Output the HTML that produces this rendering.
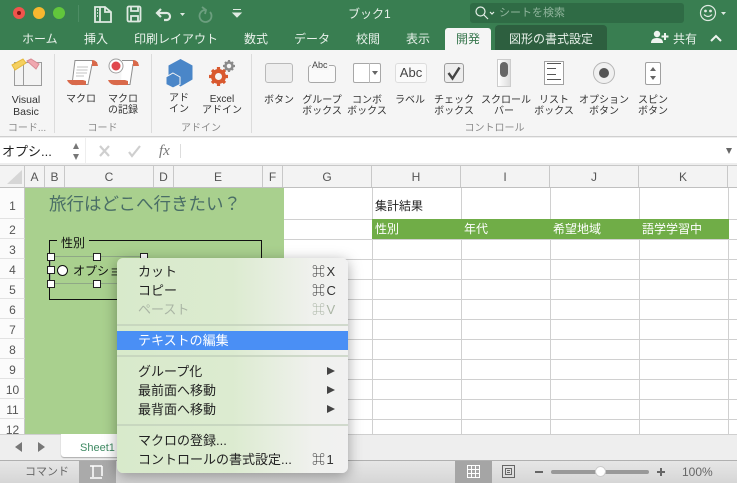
<!DOCTYPE html>
<html><head><meta charset="utf-8">
<style>
*{box-sizing:border-box}
html,body{margin:0;padding:0;width:737px;height:483px;overflow:hidden;background:#fff;font-family:"Liberation Sans","Noto Sans CJK JP",sans-serif;color:#333}
.a{position:absolute}
.t{position:absolute;white-space:nowrap;line-height:1}
.c{position:absolute;text-align:center;white-space:nowrap;line-height:11px;font-size:10px;color:#333}
.tab{position:absolute;top:32px;font-size:12px;color:#e8f1ea;white-space:nowrap;line-height:14px}
.ch{position:absolute;top:166px;height:22px;border-right:1px solid #c8c8c8;text-align:center;font-size:12px;line-height:23px;color:#555;background:#f3f3f3}
.rh{position:absolute;left:0;width:25px;text-align:center;font-size:12px;color:#555;background:#fbfbfb;border-right:1px solid #c8c8c8;border-bottom:1px solid #e2e2e2;padding-left:1px}
.hl{position:absolute;left:283px;width:454px;height:1px;background:#d0d0d0}
.vl{position:absolute;top:188px;height:246px;width:1px;background:#d0d0d0}
.h{position:absolute;width:8px;height:8px;background:#fff;border:1px solid #222}
.m{position:absolute;left:138px;font-size:13px;color:#222;white-space:nowrap;line-height:14px;margin-top:1px}
.k{position:absolute;left:312px;font-size:13px;color:#333;white-space:nowrap;line-height:14px;letter-spacing:1.500px;margin-top:1px}
.ar{position:absolute;left:327px;width:0;height:0;border-left:8px solid #444;border-top:4.500px solid transparent;border-bottom:4.500px solid transparent}
.sep{position:absolute;left:117px;width:231px;height:2px;background:rgba(190,205,185,.65)}
.g{position:absolute;top:54px;width:1px;height:79px;background:#dcdcdc}
.gl{position:absolute;top:123px;font-size:10px;color:#8a8a8a;text-align:center;line-height:12px;white-space:nowrap}
.cth{position:absolute;top:219px;height:20px;background:#70ad47;color:#fff;font-size:12px;line-height:21px;padding-left:3px;white-space:nowrap}
</style></head><body>

<!-- title bar / tabs -->
<div class="a" style="left:0;top:0;width:737px;height:50px;background:#397e51"></div>
<div class="a" style="left:13px;top:7px;width:12px;height:12px;border-radius:50%;background:#f0544c"></div>
<div class="a" style="left:17px;top:11px;width:4px;height:4px;border-radius:50%;background:#7e1512"></div>
<div class="a" style="left:33px;top:7px;width:12px;height:12px;border-radius:50%;background:#f7b72f"></div>
<div class="a" style="left:53px;top:7px;width:12px;height:12px;border-radius:50%;background:#62c63c"></div>
<div class="a" style="left:78px;top:5px;width:1px;height:17px;background:#4d8d64"></div>
<svg class="a" style="left:90px;top:3px" width="160" height="22" fill="none" stroke="#dfeae2" stroke-width="1.800">
<path d="M5 4h10l6 5v10H5zM10 4v15M15 4v5h6M7 7h1M7 10h1M7 13h1"/>
<rect x="37.500" y="3.500" width="13" height="15" rx="1.500"/><path d="M41 4v4h7V4M41 18v-5h7v5"/>
<path d="M71 6l-4 4 4 4M68 10h8a3.500 3.500 0 0 1 1 7h-3" stroke-width="2.200"/>
<path d="M90 10h5l-2.500 3z" fill="#dfeae2" stroke="none"/>
<path d="M115 7a6 6 0 1 0 5 2M112 4l4 3-1 4" stroke="#6c9f7f" stroke-width="1.800"/>
<path d="M143 6.500h8M143 10h8l-4 4z" fill="#dfeae2" stroke="#dfeae2" stroke-width="1"/>
</svg>
<div class="t" style="left:348px;top:8px;font-size:12px;color:#e8f1ea">ブック1</div>
<div class="a" style="left:470px;top:3px;width:214px;height:20px;background:#2f6b45;border-radius:3px"></div>
<svg class="a" style="left:474px;top:5px" width="22" height="16" fill="none" stroke="#e6efe8" stroke-width="1.200"><circle cx="6.500" cy="6.500" r="4.500"/><path d="M10 10l4 4M16 7l2 2 2-2"/></svg>
<div class="t" style="left:499px;top:8px;font-size:11px;color:#8fb49c">シートを検索</div>
<svg class="a" style="left:699px;top:4px" width="32" height="20" fill="none" stroke="#dfeae2" stroke-width="1.200"><circle cx="9" cy="9" r="7.500"/><circle cx="6.500" cy="7" r=".8" fill="#dfeae2"/><circle cx="11.500" cy="7" r=".8" fill="#dfeae2"/><path d="M5 10.500q4 4 8 0"/><path d="M22 8h5l-2.500 3z" fill="#dfeae2" stroke="none"/></svg>

<div class="tab" style="left:22px">ホーム</div>
<div class="tab" style="left:84px">挿入</div>
<div class="tab" style="left:134px">印刷レイアウト</div>
<div class="tab" style="left:244px">数式</div>
<div class="tab" style="left:294px">データ</div>
<div class="tab" style="left:356px">校閲</div>
<div class="tab" style="left:406px">表示</div>
<div class="a" style="left:445px;top:28px;width:46px;height:22px;background:#f5f5f5;border-radius:3px 3px 0 0"></div>
<div class="tab" style="left:456px;color:#39784f">開発</div>
<div class="a" style="left:495px;top:25px;width:112px;height:25px;background:#2d5f3f;border-radius:4px 4px 0 0"></div>
<div class="tab" style="left:509px">図形の書式設定</div>
<svg class="a" style="left:651px;top:30px" width="18" height="14" fill="#eef4ef"><circle cx="6" cy="4" r="3.200"/><path d="M0 13q0-5 6-5t6 5zM13 3h2v2.500h2.500v2H15V10h-2V7.500h-2.500v-2H13z"/></svg>
<div class="tab" style="left:673px">共有</div>
<svg class="a" style="left:709px;top:34px" width="14" height="9" fill="none" stroke="#eef4ef" stroke-width="2"><path d="M2 7l5-5 5 5"/></svg>

<!-- ribbon -->
<div class="a" style="left:0;top:50px;width:737px;height:87px;background:#f5f5f5;border-bottom:1px solid #cfcfcf"></div>
<div class="g" style="left:54px"></div><div class="g" style="left:151px"></div><div class="g" style="left:251px"></div>

<svg class="a" style="left:0;top:50px" width="300" height="50" fill="none">
<path d="M14.500 12.500h27v23h-27z" fill="#f3f3f3" stroke="#9c9c9c"/><path d="M23.500 13v22" stroke="#9c9c9c"/>
<path d="M12 15l11-6 3 4-11 7z" fill="#f5d060" stroke="#e5b93c"/>
<path d="M27 11l4-2 8 5-3 5z" fill="#f0a8b0" stroke="#d98b94"/>
<path d="M75 10.500h17l1 2h4l-5 2-4 20H72z" fill="#fff" stroke="#8f8f8f"/>
<path d="M92 10q5 0 6 6h-6z" fill="#d9694a"/>
<path d="M67 30h16l3 1v4H78q-9 1-11-5z" fill="#d9694a"/>
<path d="M77 17h11M76.500 20h11M76 23h11M76 26h8" stroke="#c3c3c3"/>
<path d="M122 10.500h11l1 2h4l-5 2-3 20h-9" fill="#fff" stroke="#8f8f8f"/>
<path d="M133 10q5 0 6 6h-6z" fill="#d9694a"/>
<circle cx="116" cy="16" r="7" fill="#fff" stroke="#a0a0a0"/><circle cx="116" cy="16" r="4.500" fill="#e0474c"/>
<path d="M108 30h17l3 1v4h-9q-9 1-11-5z" fill="#d9694a"/>
<path d="M180.500 9l12 6.500v14l-12 7-12-7v-14z" fill="#4a86c8"/>
<path d="M173 23l7 4v7.500l-7 3.500-7-3.500V27z" fill="#4a86c8" stroke="#f5f5f5"/>
<circle cx="218.500" cy="26.500" r="5.500" stroke="#d9592f" stroke-width="4"/><path d="M218.500 17v3M218.500 33v3M209 26.500h3M225 26.500h3M212 20l2 2M223 31l2 2M212 33l2-2M223 22l2-2" stroke="#d9592f" stroke-width="3.200"/>
<circle cx="229" cy="16" r="3.500" stroke="#8a8a8a" stroke-width="2.500"/><path d="M229 10v2M229 20v2M223 16h2M233 16h2M225 12l1.500 1.500M231.500 18.500l1.500 1.500M225 20l1.500-1.500M231.500 13.500l1.500-1.500" stroke="#8a8a8a" stroke-width="2.200"/>
</svg>
<div class="c" style="left:0;top:94px;width:52px;line-height:12px;font-size:10.500px">Visual<br>Basic</div>
<div class="c" style="left:60px;top:94px;width:42px">マクロ</div>
<div class="c" style="left:102px;top:94px;width:42px">マクロ<br>の記録</div>
<div class="c" style="left:159px;top:93px;width:40px">アド<br>イン</div>
<div class="c" style="left:202px;top:94px;width:40px">Excel<br>アドイン</div>
<div class="gl" style="left:0;width:54px">コード...</div>
<div class="gl" style="left:54px;width:97px">コード</div>
<div class="gl" style="left:151px;width:100px">アドイン</div>

<!-- controls -->
<div class="a" style="left:265px;top:63px;width:28px;height:20px;border:1px solid #b9b9b9;border-radius:3px;background:#eee"></div>
<div class="a" style="left:308px;top:65px;width:28px;height:18px;border:1px solid #a8a8a8;border-radius:3px;background:#fafafa"></div>
<div class="t" style="left:311px;top:61px;font-size:9px;background:#f5f5f5;padding:0 1px;color:#444">Abc</div>
<div class="a" style="left:353px;top:63px;width:28px;height:20px;border:1px solid #a8a8a8;border-radius:2px;background:#fff"></div>
<div class="a" style="left:369px;top:63px;width:1px;height:20px;background:#bbb"></div>
<div class="a" style="left:372px;top:71px;border-left:3px solid transparent;border-right:3px solid transparent;border-top:4px solid #666"></div>
<div class="a" style="left:395px;top:63px;width:32px;height:20px;border:1px solid #ddd;border-radius:3px;background:#fafafa;font-size:13px;line-height:18px;text-align:center;color:#444">Abc</div>
<div class="a" style="left:444px;top:63px;width:20px;height:20px;border:1px solid #9c9c9c;border-radius:3px;background:#ededed"></div>
<svg class="a" style="left:444px;top:63px" width="20" height="20" fill="none" stroke="#444" stroke-width="2.400"><path d="M4.500 10l4 5.500 7-11"/></svg>
<div class="a" style="left:497px;top:59px;width:14px;height:28px;background:linear-gradient(90deg,#fff,#ddd);border:1px solid #ccc"></div>
<div class="a" style="left:500px;top:62px;width:8px;height:15px;border-radius:4px;background:#666"></div>
<div class="a" style="left:544px;top:61px;width:20px;height:24px;background:#fff;border:1px solid #a0a0a0"></div>
<svg class="a" style="left:544px;top:61px" width="20" height="24" stroke="#555" fill="none"><path d="M3 2.500h14M3 7.500h9M3 13.500h9M3 18.500h14"/></svg>
<div class="a" style="left:593px;top:62px;width:22px;height:22px;border-radius:50%;background:#f0f0f0;border:1px solid #b5b5b5"></div>
<div class="a" style="left:599px;top:68px;width:10px;height:10px;border-radius:50%;background:#555"></div>
<div class="a" style="left:645px;top:62px;width:16px;height:23px;background:#fff;border:1px solid #a0a0a0;border-radius:2px"></div>
<div class="a" style="left:650px;top:67px;border-left:3px solid transparent;border-right:3px solid transparent;border-bottom:4px solid #666"></div>
<div class="a" style="left:650px;top:76px;border-left:3px solid transparent;border-right:3px solid transparent;border-top:4px solid #666"></div>

<div class="c" style="left:259px;top:95px;width:40px">ボタン</div>
<div class="c" style="left:302px;top:95px;width:40px">グループ<br>ボックス</div>
<div class="c" style="left:347px;top:95px;width:40px">コンボ<br>ボックス</div>
<div class="c" style="left:390px;top:95px;width:40px">ラベル</div>
<div class="c" style="left:434px;top:95px;width:40px">チェック<br>ボックス</div>
<div class="c" style="left:481px;top:95px;width:46px">スクロール<br>バー</div>
<div class="c" style="left:534px;top:95px;width:40px">リスト<br>ボックス</div>
<div class="c" style="left:579px;top:95px;width:50px">オプション<br>ボタン</div>
<div class="c" style="left:633px;top:95px;width:40px">スピン<br>ボタン</div>
<div class="gl" style="left:251px;width:486px;padding-left:1px">コントロール</div>

<!-- formula bar -->
<div class="a" style="left:0;top:137px;width:737px;height:29px;background:#eee;border-bottom:1px solid #c8c8c8"></div>
<div class="a" style="left:0;top:138px;width:85px;height:25px;background:#fff"></div>
<div class="t" style="left:2px;top:145px;font-size:13px;color:#222">オプシ...</div>
<div class="a" style="left:73px;top:143px;border-left:3.500px solid transparent;border-right:3.500px solid transparent;border-bottom:6px solid #777"></div>
<div class="a" style="left:73px;top:154px;border-left:3.500px solid transparent;border-right:3.500px solid transparent;border-top:6px solid #777"></div>
<div class="a" style="left:86px;top:138px;width:651px;height:25px;background:#fff"></div>
<svg class="a" style="left:96px;top:144px" width="52" height="14" fill="none" stroke="#cfcfcf" stroke-width="2.200"><path d="M4 2l9 10M13 2l-9 10M33 8l3 4 8-10"/></svg>
<div class="t" style="left:159px;top:144px;font-family:'Liberation Serif',serif;font-style:italic;font-size:15px;color:#777">fx</div>
<div class="a" style="left:180px;top:144px;width:1px;height:14px;background:#ddd"></div>
<div class="a" style="left:726px;top:148px;border-left:3.500px solid transparent;border-right:3.500px solid transparent;border-top:6px solid #666"></div>

<!-- sheet -->
<div class="a" style="left:0;top:166px;width:737px;height:22px;background:#f3f3f3;border-bottom:1px solid #c0c0c0"></div>
<div class="a" style="left:0;top:166px;width:25px;height:22px;background:#f3f3f3;border-right:1px solid #c8c8c8"></div>
<div class="a" style="left:7px;top:170px;width:0;height:0;border-bottom:14px solid #d6d6d6;border-left:15px solid transparent"></div>
<div class="ch" style="left:25px;width:20px">A</div>
<div class="ch" style="left:45px;width:20px">B</div>
<div class="ch" style="left:65px;width:89px">C</div>
<div class="ch" style="left:154px;width:20px">D</div>
<div class="ch" style="left:174px;width:89px">E</div>
<div class="ch" style="left:263px;width:20px">F</div>
<div class="ch" style="left:283px;width:89px">G</div>
<div class="ch" style="left:372px;width:89px">H</div>
<div class="ch" style="left:461px;width:89px">I</div>
<div class="ch" style="left:550px;width:89px">J</div>
<div class="ch" style="left:639px;width:89px">K</div>
<div class="a" style="left:0;top:187px;width:737px;height:1px;background:#c0c0c0"></div>

<div class="rh" style="top:188px;height:31px;line-height:36px">1</div>
<div class="rh" style="top:219px;height:20px;line-height:22px">2</div>
<div class="rh" style="top:239px;height:20px;line-height:22px">3</div>
<div class="rh" style="top:259px;height:20px;line-height:22px">4</div>
<div class="rh" style="top:279px;height:20px;line-height:22px">5</div>
<div class="rh" style="top:299px;height:20px;line-height:22px">6</div>
<div class="rh" style="top:319px;height:20px;line-height:22px">7</div>
<div class="rh" style="top:339px;height:20px;line-height:22px">8</div>
<div class="rh" style="top:359px;height:20px;line-height:22px">9</div>
<div class="rh" style="top:379px;height:20px;line-height:22px">10</div>
<div class="rh" style="top:399px;height:20px;line-height:22px">11</div>
<div class="rh" style="top:419px;height:15px;line-height:22px;overflow:hidden;border-bottom:0">12</div>

<div class="hl" style="top:219px"></div><div class="hl" style="top:239px"></div><div class="hl" style="top:259px"></div><div class="hl" style="top:279px"></div><div class="hl" style="top:299px"></div><div class="hl" style="top:319px"></div><div class="hl" style="top:339px"></div><div class="hl" style="top:359px"></div><div class="hl" style="top:379px"></div><div class="hl" style="top:399px"></div><div class="hl" style="top:419px"></div>
<div class="vl" style="left:372px"></div><div class="vl" style="left:461px"></div><div class="vl" style="left:550px"></div><div class="vl" style="left:639px"></div><div class="vl" style="left:728px"></div>

<div class="t" style="left:375px;top:200px;font-size:12px;color:#222">集計結果</div>
<div class="cth" style="left:372px;width:89px">性別</div>
<div class="cth" style="left:461px;width:89px">年代</div>
<div class="cth" style="left:550px;width:89px">希望地域</div>
<div class="cth" style="left:639px;width:90px">語学学習中</div>

<!-- green shape -->
<div class="a" style="left:25px;top:188px;width:259px;height:246px;background:#a9d08e"></div>
<div class="t" style="left:49px;top:196px;font-size:17.500px;color:#4a6e66">旅行はどこへ行きたい？</div>
<div class="a" style="left:49px;top:240px;width:213px;height:60px;border:1px solid #111"></div>
<div class="t" style="left:57px;top:237px;font-size:12px;color:#111;background:#a9d08e;padding:0 4px">性別</div>
<div class="a" style="left:50px;top:256px;width:94px;height:28px;border:1px solid #8fa886"></div>
<div class="a" style="left:57px;top:265px;width:11px;height:11px;border-radius:50%;background:#fff;border:1.500px solid #111"></div>
<div class="t" style="left:73px;top:265px;font-size:12px;color:#111">オプション</div>
<div class="h" style="left:47px;top:253px"></div><div class="h" style="left:93px;top:253px"></div><div class="h" style="left:140px;top:253px"></div>
<div class="h" style="left:47px;top:266px"></div>
<div class="h" style="left:47px;top:280px"></div><div class="h" style="left:93px;top:280px"></div>

<!-- sheet tabs -->
<div class="a" style="left:0;top:434px;width:737px;height:27px;background:#eeeeee;border-top:1px solid #cfcfcf;border-bottom:1px solid #b0b0b0"></div>
<div class="a" style="left:15px;top:442px;border-right:7px solid #777;border-top:5px solid transparent;border-bottom:5px solid transparent"></div>
<div class="a" style="left:38px;top:442px;border-left:7px solid #777;border-top:5px solid transparent;border-bottom:5px solid transparent"></div>
<div class="a" style="left:61px;top:434px;width:70px;height:23px;background:#fff;border-radius:0 0 3px 3px;box-shadow:0 1px 1px #aaa"></div>
<div class="t" style="left:80px;top:443px;font-size:11px;color:#3f8a63">Sheet1</div>

<!-- status bar -->
<div class="a" style="left:0;top:461px;width:737px;height:22px;background:linear-gradient(#e6e6e6,#d6d6d6)"></div>
<div class="t" style="left:25px;top:467px;font-size:11px;color:#666">コマンド</div>
<div class="a" style="left:79px;top:461px;width:37px;height:22px;background:#aaa"></div>
<svg class="a" style="left:87px;top:463px" width="20" height="18" fill="none" stroke="#fff" stroke-width="1.500"><path d="M3 3h4M6 3v11M7 3h8M15 3v10M3 15h12" /></svg>
<div class="a" style="left:455px;top:461px;width:37px;height:22px;background:#a5a5a5"></div>
<svg class="a" style="left:467px;top:465px" width="14" height="14" fill="none" stroke="#fff"><path d="M.5.500h12v12H.500zM.5 4.500h12M.5 8.500h12M4.500.500v12M8.500.500v12"/></svg>
<svg class="a" style="left:502px;top:465px" width="14" height="14" fill="none" stroke="#666"><path d="M.5.500h12v12H.500zM3.500 3.500h6v6h-6zM5 5.500h3M5 7.500h3"/></svg>
<div class="a" style="left:535px;top:471px;width:8px;height:2px;background:#666"></div>
<div class="a" style="left:551px;top:470px;width:98px;height:4px;border-radius:2px;background:#999"></div>
<div class="a" style="left:595px;top:466px;width:11px;height:11px;border-radius:50%;background:#fff;border:1px solid #ccc"></div>
<div class="a" style="left:657px;top:471px;width:8px;height:2px;background:#666"></div>
<div class="a" style="left:660px;top:468px;width:2px;height:8px;background:#666"></div>
<div class="t" style="left:682px;top:466px;font-size:12px;color:#666">100%</div>

<!-- context menu -->
<div class="a" style="left:117px;top:258px;width:231px;height:215px;border-radius:6px;background:linear-gradient(90deg,#d8eacb 0%,#dcebd0 50%,#f0f1ee 85%,#f1f1f1 100%);box-shadow:0 3px 14px rgba(0,0,0,.35)"></div>
<div class="m" style="top:264px">カット</div><div class="k" style="top:264px">⌘X</div>
<div class="m" style="top:283px">コピー</div><div class="k" style="top:283px">⌘C</div>
<div class="m" style="top:302px;color:#aab5a5">ペースト</div><div class="k" style="top:302px;color:#aab5a5">⌘V</div>
<div class="sep" style="top:324px"></div>
<div class="a" style="left:117px;top:331px;width:231px;height:19px;background:#4a8ff5"></div>
<div class="m" style="top:333px;color:#fff">テキストの編集</div>
<div class="sep" style="top:355px"></div>
<div class="m" style="top:364px">グループ化</div><div class="ar" style="top:367px"></div>
<div class="m" style="top:383px">最前面へ移動</div><div class="ar" style="top:386px"></div>
<div class="m" style="top:402px">最背面へ移動</div><div class="ar" style="top:405px"></div>
<div class="sep" style="top:424px"></div>
<div class="m" style="top:433px">マクロの登録...</div>
<div class="m" style="top:452px">コントロールの書式設定...</div><div class="k" style="top:452px">⌘1</div>

</body></html>
